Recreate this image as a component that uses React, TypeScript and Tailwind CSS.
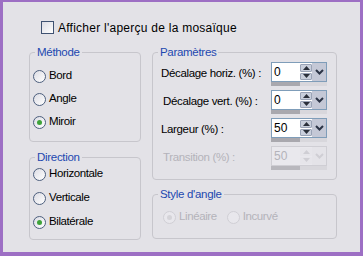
import React from "react";

const font = { fontFamily: '"Liberation Sans", Arial, sans-serif' };

function Radio({ label, checked, disabled }: { label: string; checked?: boolean; disabled?: boolean }) {
  return (
    <div className={`flex items-center gap-[3px] h-[16px] whitespace-nowrap ${disabled ? "text-[#b4b3ba]" : "text-black"}`}>
      <div
        className={`w-[13px] h-[13px] shrink-0 rounded-full border flex items-center justify-center ${
          disabled
            ? "border-[#d0cfd5] bg-[#e8e7ec]"
            : "border-[#4d5f7e] bg-gradient-to-br from-[#dcdce4] to-[#ffffff]"
        }`}
      >
        {checked && (
          <div className={`w-[5px] h-[5px] rounded-full ${disabled ? "bg-[#d4d3d8]" : "bg-[#3ea33a]"}`} />
        )}
      </div>
      <span className="text-[11.5px] tracking-[-0.4px]">{label}</span>
    </div>
  );
}

function Group({
  title,
  className,
  bodyClass,
  children,
}: {
  title: string;
  className?: string;
  bodyClass?: string;
  children: React.ReactNode;
}) {
  return (
    <fieldset className={`border border-[#c7c6cc] rounded-[4px] ${className ?? ""}`}>
      <legend className="ml-[5px] px-[2px] text-[#1d48b0] leading-[14px] text-[11.5px] tracking-[-0.3px]">{title}</legend>
      <div className={bodyClass}>{children}</div>
    </fieldset>
  );
}

function Spin({ value, disabled }: { value: string; disabled?: boolean }) {
  return (
    <div className="flex flex-col w-[56px] shrink-0">
      <div
        className={`flex h-[20px] border ${disabled ? "border-[#cfced4] bg-[#e9e8ed]" : "border-[#7f9db9] bg-white"}`}
      >
        <div className={`flex-1 pl-[2px] leading-[18px] ${disabled ? "text-[#b4b3ba]" : "text-black"}`}>{value}</div>
        <div className="w-[12px] flex flex-col justify-center gap-[1px] py-[1px]">
          <div
            className={`h-[8px] rounded-[1px] flex items-center justify-center ${
              disabled ? "bg-[#e6e5ea]" : "bg-[#c9cfdc] border border-[#9aa3b6]"
            }`}
          >
            <svg width="7" height="4" viewBox="0 0 7 4">
              <path d="M0 4 L3.5 0 L7 4 Z" fill={disabled ? "#cfced4" : "#2a2f3a"} />
            </svg>
          </div>
          <div
            className={`h-[8px] rounded-[1px] flex items-center justify-center ${
              disabled ? "bg-[#e6e5ea]" : "bg-[#c9cfdc] border border-[#9aa3b6]"
            }`}
          >
            <svg width="7" height="4" viewBox="0 0 7 4">
              <path d="M0 0 L3.5 4 L7 0 Z" fill={disabled ? "#cfced4" : "#2a2f3a"} />
            </svg>
          </div>
        </div>
        <div
          className={`w-[14px] flex items-center justify-center ${disabled ? "bg-[#e4e3e8]" : "bg-[#c4c8d6]"}`}
        >
          <svg width="9" height="6" viewBox="0 0 9 6">
            <path
              d="M1 1 L4.5 4.5 L8 1"
              fill="none"
              stroke={disabled ? "#cfced4" : "#2c3446"}
              strokeWidth="2"
            />
          </svg>
        </div>
      </div>
      <div className="flex h-[4px]">
        <div className={`w-[29px] ${disabled ? "bg-[#b8b7bd]" : "bg-[#a9a8ae]"}`} />
        <div className="flex-1 bg-[#d8d7dc]" />
      </div>
    </div>
  );
}

function Row({ label, value, disabled, indent }: { label: string; value: string; disabled?: boolean; indent?: boolean }) {
  return (
    <div className="flex items-start justify-between h-[28px]">
      <span
        className={`mt-[3px] whitespace-nowrap text-[11.5px] tracking-[-0.35px] ${indent ? "ml-[2px]" : ""} ${
          disabled ? "text-[#b4b3ba]" : "text-black"
        }`}
      >
        {label}
      </span>
      <Spin value={value} disabled={disabled} />
    </div>
  );
}

export default function App() {
  return (
    <div
      className="w-[363px] h-[256px] border-t-[2px] border-l-[3px] border-r-[3px] border-b-[4px] border-[#9d6fc4] bg-[#e3e2e7] text-[12px] overflow-hidden"
      style={font}
    >
      <div className="flex items-center gap-[4px] pl-[38px] pt-[17px] h-[34px]">
        <div className="w-[13px] h-[13px] border border-[#3f5272] bg-gradient-to-br from-[#dcdce4] to-white" />
        <span className="text-black tracking-[0.25px] whitespace-nowrap">Afficher l'aperçu de la mosaïque</span>
      </div>
      <div className="flex gap-[11px] pl-[26px] pt-[9px]">
        <div className="flex flex-col w-[112px]">
          <Group title="Méthode" className="h-[97px]" bodyClass="flex flex-col gap-[7px] pl-[3px] pt-[9px]">
            <Radio label="Bord" />
            <Radio label="Angle" />
            <Radio label="Miroir" checked />
          </Group>
          <Group title="Direction" className="h-[90px] mt-[8px]" bodyClass="flex flex-col gap-[8px] pl-[3px] pt-[2px]">
            <Radio label="Horizontale" />
            <Radio label="Verticale" />
            <Radio label="Bilatérale" checked />
          </Group>
        </div>
        <div className="flex flex-col w-[185px]">
          <Group title="Paramètres" className="h-[135px]" bodyClass="pl-[8px] pr-[9px] pt-[3px]">
            <Row label="Décalage horiz. (%) :" value="0" />
            <Row label="Décalage vert. (%) :" value="0" indent />
            <Row label="Largeur (%) :" value="50" />
            <Row label="Transition (%) :" value="50" disabled indent />
          </Group>
          <Group title="Style d'angle" className="h-[52px] mt-[7px]" bodyClass="flex gap-[10px] pl-[10px] pt-[8px]">
            <Radio label="Linéaire" checked disabled />
            <Radio label="Incurvé" disabled />
          </Group>
        </div>
      </div>
    </div>
  );
}
